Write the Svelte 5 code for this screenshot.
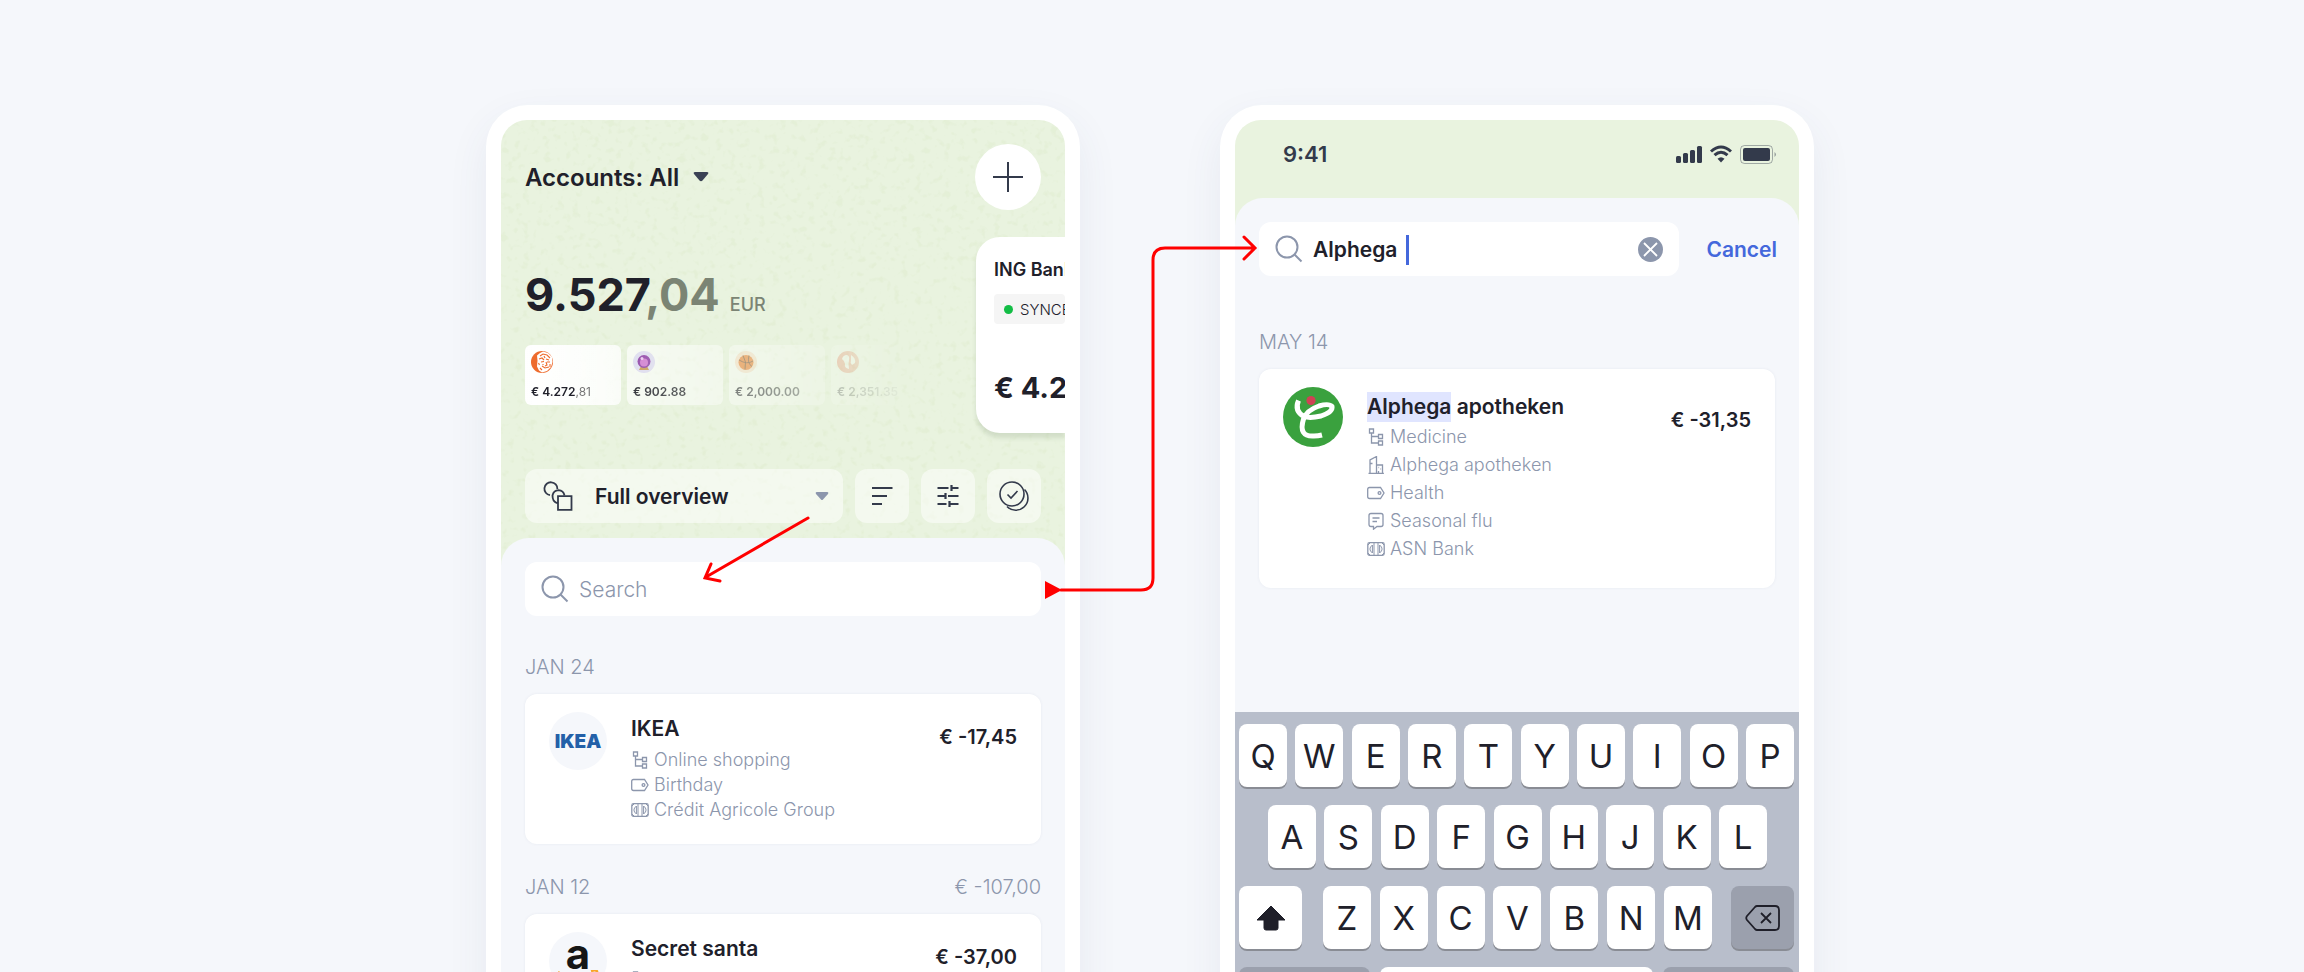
<script>
	let filter = 'full';
	let search = '';
	let query = 'Alphega';

	const accounts = [
		{ icon: 'lion', whole: '€ 4.272', cents: ',81' },
		{ icon: 'crystal', whole: '€ 902.88', cents: '' },
		{ icon: 'ball', whole: '€ 2,000.00', cents: '' },
		{ icon: 'mask', whole: '€ 2,351.35', cents: '' },
	];

	const days = [
		{
			date: 'JAN 24',
			total: '',
			name: 'IKEA',
			logo: 'ikea',
			amount: '€ -17,45',
			meta: [
				['tree', 'Online shopping'],
				['tag', 'Birthday'],
				['bank', 'Crédit Agricole Group'],
			],
		},
		{
			date: 'JAN 12',
			total: '€ -107,00',
			name: 'Secret santa',
			logo: 'amazon',
			amount: '€ -37,00',
			meta: [
				['tree', ''],
			],
		},
	];

	const found = [
		['tree', 'Medicine'],
		['building', 'Alphega apotheken'],
		['tag', 'Health'],
		['note', 'Seasonal flu'],
		['bank', 'ASN Bank'],
	];

	const row1 = 'QWERTYUIOP'.split('');
	const row2 = 'ASDFGHJKL'.split('');
	const row3 = 'ZXCVBNM'.split('');
</script>

{#snippet metaIcon(kind)}
	<svg class="meta-icon" viewBox="0 0 18 18" fill="none" stroke="currentColor" stroke-width="1.3" aria-hidden="true">
		{#if kind === 'tree'}
			<path d="M2.5 1h4v4h-4zM11.500 6.500h4v4h-4zM11.500 13h4v4h-4zM4.500 5v10h7M4.500 8.500h7" />
		{:else if kind === 'tag'}
			<path d="M2.500 3.500h11l3.500 5.500-3.500 5.500h-11q-1.800 0-1.800-1.800V5.300Q.7 3.500 2.500 3.500z" />
			<circle cx="12.500" cy="9" r="1.400" />
		{:else if kind === 'bank'}
			<rect x=".8" y="2.600" width="16.400" height="12.800" rx="1.800" />
			<path d="M7 2.600v12.800M11 2.600v12.800M5.400 5q-5 4 0 8zM12.600 5q5 4 0 8zM1 5l2-2M17 5l-2-2M1 13l2 2M17 13l-2 2" stroke-width="1" />
		{:else if kind === 'building'}
			<path d="M3 17.500V4l6.500-3.500v17M9.500 9h6v8.500M1.500 17.400h15.400M3 7.500h2.500M11.500 17v-2M11.500 11.500h.6M13.500 13h.6" />
		{:else}
			<path d="M4 1.500h10q2 0 2 2v9q0 2-2 2h-4l-3.500 2.700v-2.700H4q-2 0-2-2v-9q0-2 2-2zM5.500 6h7M5.500 9.500h4.500" />
		{/if}
	</svg>
{/snippet}

{#snippet lens()}
	<svg class="lens" viewBox="0 0 28 28" fill="none" stroke="#8c96ac" stroke-width="2" aria-hidden="true">
		<circle cx="12" cy="12" r="10.500" />
		<path d="M19.500 19.500l7 7" />
	</svg>
{/snippet}

{#snippet speckle(id)}
	<svg class="speckle" aria-hidden="true">
		<filter {id} x="0" y="0" width="100%" height="100%" color-interpolation-filters="sRGB">
			<feTurbulence type="fractalNoise" baseFrequency="0.14" numOctaves="2" seed="4" />
			<feColorMatrix values="0 0 0 0 0.84  0 0 0 0 0.9  0 0 0 0 0.75  0 5 0 0 -2.8" />
		</filter>
		<rect width="100%" height="100%" filter="url(#{id})" opacity="0.25" />
	</svg>
{/snippet}

<main>
	<div class="stage">
		<section class="phone">
			<div class="screen">
				<header class="hero">
					{@render speckle('grain')}
					<div class="topbar">
						<button class="accounts">
							Accounts: All
							<svg width="16" height="10" viewBox="0 0 16 10" aria-hidden="true">
								<path d="M2 0h12q2 0 1 2L9.500 8.500Q8 10 6.500 8.500L1 2Q0 0 2 0z" fill="#3b4255" />
							</svg>
						</button>
						<button class="add" aria-label="Add account">
							<svg width="32" height="32" viewBox="0 0 32 32" aria-hidden="true">
								<path d="M16 1v30M1 16h30" stroke="#333a4b" stroke-width="2" />
							</svg>
						</button>
					</div>

					<div class="summary">
						<div class="totals">
							<div class="balance">
								<strong>9.527<span>,04</span></strong>
								<small>EUR</small>
							</div>
							<ul class="minis">
								{#each accounts as account}
									<li>
										<svg width="22" height="22" viewBox="0 0 22 22" aria-hidden="true">
											{#if account.icon === 'lion'}
												<circle cx="11" cy="11" r="11" fill="#ee6b2d" />
												<path d="M9 2l3-1.500 5 1.500 4 4 .5 5-1.500 5-4 4-5 1.500-3-2-2-4 .5-6-.5-5z" fill="#fff" />
												<path d="M9 5l3-2 4 1 3 3M8 8l3-1 2 2M15 8l3 1M10 11l3-.5M16 11h3M15 11l1 3-2 1M11 15l3 2 4-1M9 17l2 2M19 13v3M7.500 12l1 2M13 5l1 2M12 13v1" fill="none" stroke="#ee6b2d" stroke-width="1.100" />
											{:else if account.icon === 'crystal'}
												<circle cx="11" cy="11" r="11" fill="#dfdcf2" />
												<path d="M6 19l2-4h6l2 4z" fill="#c99a55" />
												<circle cx="11" cy="10.500" r="6.500" fill="#8f3fa8" />
												<circle cx="11" cy="11.500" r="4" fill="#d27bd2" />
												<circle cx="9" cy="7.500" r="1.500" fill="#ecc8f2" />
											{:else if account.icon === 'ball'}
												<circle cx="11" cy="11" r="11" fill="#f7dfc8" />
												<circle cx="11" cy="11.500" r="7.500" fill="#ea7623" />
												<path d="M4 9q8 5 14 1M8 4.500q4 6 2 14M14 4.500q-2 8 3 11" fill="none" stroke="#5a3b25" stroke-width=".8" />
											{:else}
												<circle cx="11" cy="11" r="11" fill="#e8643f" />
												<path d="M5 8q1-4 5-4 3 1 2 5t0 9q-5-1-4-5 0-3-3-5zM14 4q5 3 4 8l-3 2q-2-2-1-5z" fill="#fff" />
											{/if}
										</svg>
										<span>{account.whole}<i>{account.cents}</i></span>
									</li>
								{/each}
							</ul>
						</div>

						<article class="bank-card">
							<h2>ING Bank</h2>
							<p class="synced">SYNCED</p>
							<strong>€ 4.272,81</strong>
						</article>
					</div>

					<div class="tools">
						<label class="overview">
							<svg width="30" height="30" viewBox="0 0 30 30" fill="none" stroke="#333a4b" stroke-width="1.800" aria-hidden="true">
								<path d="M7 14.200A6.500 6.500 0 1 1 14.400 8M15 21.800h-1.500q-4-1.500-4-7.300 1-5 6-5.300 5 .3 6 5.300" />
								<path d="M15 15.200h13.500v13.600H15z" />
							</svg>
							<select bind:value={filter} aria-label="Overview">
								<option value="full">Full overview</option>
							</select>
							<svg width="14" height="9" viewBox="0 0 14 9" aria-hidden="true">
								<path d="M1.500 0h11Q14 .3 13 2L8 7.500Q7 8.500 6 7.500L1 2Q0 .3 1.500 0z" fill="#8c96ac" />
							</svg>
						</label>
						<button aria-label="Sort">
							<svg width="30" height="30" viewBox="0 0 30 30" fill="none" stroke="#333a4b" stroke-width="2.200" aria-hidden="true">
								<path d="M5 7h20.500M5 15h15M5 23h10" />
							</svg>
						</button>
						<button aria-label="Filter">
							<svg width="30" height="30" viewBox="0 0 30 30" fill="none" stroke="#333a4b" stroke-width="2.200" aria-hidden="true">
								<path d="M4.500 7h11M18.500 7h7M18.500 4v6M4.500 15h7M12.500 12v6M15 15h10.500M4.500 23h9M16.500 20v6M16.500 23h9" />
							</svg>
						</button>
						<button aria-label="Select">
							<svg width="30" height="30" viewBox="0 0 30 30" fill="none" stroke="#333a4b" stroke-width="1.600" aria-hidden="true">
								<circle cx="13" cy="13" r="12" />
								<path d="M25.500 8.500A11.900 11.900 0 1 1 8 25.500" />
								<path d="M8.500 13.500l3.500 3.500 6.500-7" />
							</svg>
						</button>
					</div>
				</header>

				<div class="sheet">
					<label class="search">
						{@render lens()}
						<input type="text" placeholder="Search" aria-label="Search" bind:value={search} />
					</label>

					{#each days as day}
						<div class="date"><span>{day.date}</span><span>{day.total}</span></div>
						<article class="card">
							<div class="logo">
								{#if day.logo === 'ikea'}
									<span class="ikea">IKEA</span>
								{:else}
									<span class="amazon">a</span>
									<svg width="42" height="14" viewBox="0 0 42 14" aria-hidden="true">
										<path d="M1 2q18 14 35 4M34 1q7-2 6 2t-3 6" fill="none" stroke="#f9a428" stroke-width="2.500" />
									</svg>
								{/if}
							</div>
							<div class="details">
								<h3>{day.name}</h3>
								<ul>
									{#each day.meta as [kind, text]}
										<li>{@render metaIcon(kind)}{text}</li>
									{/each}
								</ul>
							</div>
							<strong class="amount">{day.amount}</strong>
						</article>
					{/each}
				</div>
			</div>
		</section>

		<section class="phone">
			<div class="screen">
				<header class="status">
					<span>9:41</span>
					<svg width="102" height="20" viewBox="0 0 102 20" fill="#333a4b" aria-hidden="true">
						<rect x="0" y="12" width="5" height="7" rx="1.500" />
						<rect x="7" y="9" width="5" height="10" rx="1.500" />
						<rect x="14" y="6" width="5" height="13" rx="1.500" />
						<rect x="21" y="2" width="5" height="17" rx="1.500" />
						<path d="M35 7.500Q45 -1.500 55 7.500M38.500 11.200q6.500-6 13 0" fill="none" stroke="#333a4b" stroke-width="3" />
						<path d="M41.500 14.800q3.500-3 7 0L45 18.600z" />
						<rect x="64.500" y="1.500" width="32" height="18" rx="4" fill="none" stroke="#333a4b" opacity=".4" />
						<rect x="67" y="4" width="27" height="13" rx="2" />
						<path d="M98.500 8q3 2.500 0 5z" opacity=".45" />
					</svg>
				</header>

				<div class="sheet">
					<div class="search-row">
						<label class="search">
							{@render lens()}
							<span class="typed">
								<input type="text" aria-label="Search transactions" bind:value={query} />
							</span>
							<button class="clear" aria-label="Clear search">
								<svg width="25" height="25" viewBox="0 0 25 25" aria-hidden="true">
									<circle cx="12.500" cy="12.500" r="12.500" fill="#8c96ac" />
									<path d="M6 6l13 13M19 6L6 19" stroke="#fff" stroke-width="1.800" />
								</svg>
							</button>
						</label>
						<button class="cancel">Cancel</button>
					</div>

					<div class="date spaced"><span>MAY 14</span></div>
					<article class="card result">
						<svg class="logo" viewBox="0 0 60 60" aria-hidden="true">
							<circle cx="30" cy="30" r="30" fill="#3aa13e" />
							<path d="M15.500 13.500Q11 24 21 29.500Q27 31.500 38 29Q50 25 49 19.500Q46 16 36 19Q24 23 20.500 32Q15 50 31 49Q35 49 39 48" fill="none" stroke="#fff" stroke-width="5" />
							<circle cx="28" cy="13.500" r="4.600" fill="#cf4254" />
						</svg>
						<div class="details">
							<h3><mark>Alphega</mark> apotheken</h3>
							<ul>
								{#each found as [kind, text]}
									<li>{@render metaIcon(kind)}{text}</li>
								{/each}
							</ul>
						</div>
						<strong class="amount">€ -31,35</strong>
					</article>
				</div>

				<div class="keyboard">
					<div class="keys">
						{#each row1 as key}<button>{key}</button>{/each}
					</div>
					<div class="keys inset">
						{#each row2 as key}<button>{key}</button>{/each}
					</div>
					<div class="keys">
						<button class="wide" aria-label="Shift">
							<svg width="30" height="26" viewBox="0 0 30 26" aria-hidden="true">
								<path d="M15 1L29 15H22V23q0 2-2 2H10q-2 0-2-2V15H1z" fill="#1f1f29" stroke="#1f1f29" stroke-linejoin="round" />
							</svg>
						</button>
						<div class="keys middle">
							{#each row3 as key}<button>{key}</button>{/each}
						</div>
						<button class="wide dark" aria-label="Backspace">
							<svg width="36" height="28" viewBox="0 0 36 28" fill="none" stroke="#1f1f29" stroke-width="1.800" aria-hidden="true">
								<path d="M12 2h18q4 0 4 4v16q0 4-4 4H12q-1 0-2-1L2 16q-1.500-2 0-4l8-9q1-1 2-1z" />
								<path d="M16 9l10 10M26 9L16 19" />
							</svg>
						</button>
					</div>
					<div class="keys bottom">
						<button class="dark" aria-label="Numbers"></button>
						<button class="space" aria-label="Space"></button>
						<button class="dark" aria-label="Return"></button>
					</div>
				</div>
			</div>
		</section>

		<!-- the flow arrows lie over both phones -->
		<svg class="flow" width="780" height="500" viewBox="0 0 780 500" fill="none" stroke="#f00" stroke-width="3" stroke-linecap="round" aria-hidden="true">
			<path d="M322 413L220 472M225 459l-6 14 15 3" />
			<path d="M575 485h80q12 0 12-12V155q0-12 12-12h90M758 132l11 11-11 11" />
			<path d="M559 476v18l17-9z" fill="#f00" stroke="none" />
		</svg>
	</div>
</main>

<style>
	:global(body) {
		background: #f5f7fb;
	}

	main {
		box-sizing: border-box;
		height: 100vh;
		padding: 105px 4px 0 0;
		overflow: hidden;
		display: flex;
		justify-content: center;
		color: #20202a;
		font-family: Inter, "Liberation Sans", sans-serif;
	}

	button, input, select {
		font: inherit;
		color: inherit;
		border: 0;
		padding: 0;
		background: none;
	}

	h2, h3, p, ul {
		margin: 0;
		padding: 0;
		list-style: none;
	}

	svg {
		display: block;
		flex: none;
	}

	.stage {
		position: relative;
		display: flex;
		gap: 140px;
		width: 100%;
		max-width: 1328px;
	}

	.flow {
		position: absolute;
		top: 0;
		left: 0;
		pointer-events: none;
	}

	.phone {
		box-sizing: border-box;
		flex: 1;
		min-width: 0;
		padding: 15px;
		border-radius: 42px;
		min-height: 952px;
		background: #fff;
		box-shadow: 0 16px 40px rgba(60, 80, 120, 0.08);
	}

	.screen {
		height: 100%;
		border-radius: 26px;
		overflow: hidden;
		background: #e9f3df;
		display: flex;
		flex-direction: column;
	}

	.hero {
		position: relative;
		padding: 24px 24px 15px;
	}

	.speckle {
		position: absolute;
		top: 0;
		left: 0;
		width: 100%;
		height: 110%;
	}

	.topbar, .summary, .tools {
		position: relative;
		display: flex;
	}

	.topbar {
		justify-content: space-between;
		align-items: center;
	}

	.accounts {
		display: flex;
		align-items: center;
		gap: 14px;
		font-size: 24px;
		font-weight: 600;
	}

	.add {
		display: grid;
		place-items: center;
		width: 66px;
		height: 66px;
		border-radius: 50%;
		background: #fff;
	}

	.summary {
		justify-content: space-between;
		margin: 27px -24px 0 0;
	}

	.balance {
		display: flex;
		align-items: baseline;
		gap: 10px;
		margin-top: 28px;
		line-height: 60px;
	}

	.balance strong {
		font-size: 45px;
		font-weight: 700;
	}

	.balance span {
		color: #7b8474;
	}

	.balance small {
		font-size: 18px;
		font-weight: 500;
		color: #7b8474;
	}

	.minis {
		display: flex;
		gap: 6px;
		margin-top: 10px;
		mask-image: linear-gradient(to right, #000 80px, rgba(0, 0, 0, 0.75) 140px, rgba(0, 0, 0, 0.45) 240px, transparent 385px);
	}

	.minis li {
		box-sizing: border-box;
		width: 96px;
		height: 60px;
		padding: 6px;
		border-radius: 6px;
		background: linear-gradient(to right, #fff, rgba(255, 255, 255, 0.8));
		display: flex;
		flex-direction: column;
		justify-content: space-between;
		font-size: 12px;
		font-weight: 600;
		line-height: 14px;
		white-space: nowrap;
	}

	.minis li + li {
		background: rgba(255, 255, 255, 0.7);
	}

	.minis i {
		font-style: normal;
		font-weight: 400;
		color: #777;
	}

	.bank-card {
		box-sizing: border-box;
		width: 89px;
		height: 196px;
		padding: 22px 0 0 18px;
		border-radius: 24px 0 0 24px;
		background: #fff;
		box-shadow: 0 5px 4px rgba(90, 110, 80, 0.16);
		overflow: hidden;
		white-space: nowrap;
	}

	.bank-card h2 {
		font-size: 18px;
		font-weight: 600;
		line-height: 22px;
	}

	.bank-card strong {
		display: block;
		margin-top: 46px;
		font-size: 29px;
		font-weight: 700;
		line-height: 36px;
	}

	.synced {
		display: flex;
		align-items: center;
		gap: 7px;
		height: 30px;
		margin-top: 13px;
		padding-left: 10px;
		border-radius: 4px;
		background: #f5f5f5;
		font-size: 15px;
		font-weight: 300;
	}

	.synced::before {
		content: "";
		flex: none;
		width: 9px;
		height: 9px;
		border-radius: 50%;
		background: #12bd45;
	}

	.tools {
		gap: 12px;
		margin-top: 36px;
	}

	.tools button, .overview {
		height: 54px;
		border-radius: 12px;
		background: rgba(255, 255, 255, 0.5);
	}

	.tools button {
		display: grid;
		place-items: center;
		width: 54px;
	}

	.overview {
		flex: 1;
		min-width: 0;
		display: flex;
		align-items: center;
		padding: 0 14px 0 18px;
	}

	.overview select {
		flex: 1;
		min-width: 0;
		margin-left: 22px;
		appearance: none;
		font-size: 21px;
		font-weight: 600;
	}

	.sheet {
		position: relative;
		flex: 1;
		padding: 24px 24px 0;
		border-radius: 28px 28px 0 0;
		background: #f5f7fb;
	}

	.search {
		flex: 1;
		min-width: 0;
		height: 54px;
		padding: 0 16px;
		border-radius: 12px;
		background: #fff;
		display: flex;
		align-items: center;
		gap: 10px;
		font-size: 21px;
	}

	.lens {
		width: 28px;
		height: 28px;
	}

	.search input {
		flex: 1;
		width: 100%;
		min-width: 0;
		outline: 0;
	}

	.search input::placeholder {
		color: #8c96ac;
		font-weight: 300;
		opacity: 1;
	}

	.date {
		display: flex;
		justify-content: space-between;
		margin: 36px 0 12px;
		font-size: 20px;
		font-weight: 300;
		line-height: 30px;
		color: #8c96ac;
	}

	.date.spaced {
		margin-top: 51px;
	}

	.card {
		display: flex;
		padding: 18px 24px 22px;
		border-radius: 12px;
		background: #fff;
		box-shadow: 0 0 3px rgba(60, 80, 120, 0.08);
	}

	.card + .date {
		margin-top: 28px;
	}

	div.logo {
		flex: none;
		display: flex;
		flex-direction: column;
		align-items: center;
		justify-content: center;
		width: 58px;
		height: 58px;
		border-radius: 50%;
		background: #f5f7fb;
	}

	svg.logo {
		width: 60px;
		height: 60px;
	}

	.ikea {
		font-size: 19px;
		font-weight: 900;
		color: #2360a8;
	}

	.amazon {
		font-size: 42px;
		font-weight: 700;
		line-height: 32px;
		color: #161616;
	}

	.details {
		flex: 1;
		min-width: 0;
		margin-left: 24px;
	}

	.details h3 {
		font-size: 21px;
		font-weight: 600;
		line-height: 34px;
	}

	.details li {
		display: flex;
		align-items: center;
		gap: 5px;
		font-size: 18px;
		font-weight: 300;
		line-height: 25px;
		min-height: 25px;
		color: #8c96ac;
	}

	.details ul {
		margin-top: 1px;
	}

	.meta-icon {
		width: 18px;
		height: 18px;
	}

	.amount {
		font-size: 20px;
		font-weight: 600;
		line-height: 51px;
	}

	.status {
		display: flex;
		justify-content: space-between;
		padding: 19px 21px 29px 48px;
		font-size: 22px;
		font-weight: 600;
		line-height: 30px;
		color: #333a4b;
	}

	.status svg {
		margin-top: 5px;
	}

	.search-row {
		display: flex;
		gap: 27px;
		margin-right: -2px;
	}

	.typed {
		flex: 1;
		min-width: 0;
		position: relative;
	}

	.typed input {
		font-weight: 600;
	}

	/* text caret */
	.typed::after {
		content: "";
		position: absolute;
		top: -2px;
		left: 93px;
		width: 3px;
		height: 30px;
		background: #4468dc;
	}

	.cancel {
		font-size: 21px;
		font-weight: 600;
		color: #4468dc;
	}

	.result {
		padding-bottom: 25px;
	}

	.result h3 {
		line-height: 30px;
		margin-top: 5px;
	}

	.result mark {
		display: inline-block;
		color: inherit;
		background: #e0e5ff;
	}

	.result li {
		line-height: 28px;
	}

	.result .amount {
		line-height: 67px;
	}

	.keyboard {
		position: relative;
		padding: 12px 5px 12px 4px;
		background: #b8becb;
		display: flex;
		flex-direction: column;
		gap: 18px;
	}

	.keys {
		display: flex;
		justify-content: space-between;
	}

	.keys.inset {
		padding: 0 27px 0 29px;
	}

	.keys.middle {
		flex: 1;
		margin: 0 19px 0 21px;
	}

	.keys button {
		display: grid;
		place-items: center;
		width: 48px;
		height: 63px;
		border-radius: 8px;
		background: #fff;
		box-shadow: 0 2px 0 #898c94;
		font-size: 33px;
	}

	.keys .wide {
		width: 63px;
	}

	.keys .dark {
		background: #9ba0ad;
	}

	.bottom {
		gap: 10px;
	}

	.keys.bottom button {
		width: 131px;
	}

	.keys.bottom .space {
		flex: 1;
	}
</style>
